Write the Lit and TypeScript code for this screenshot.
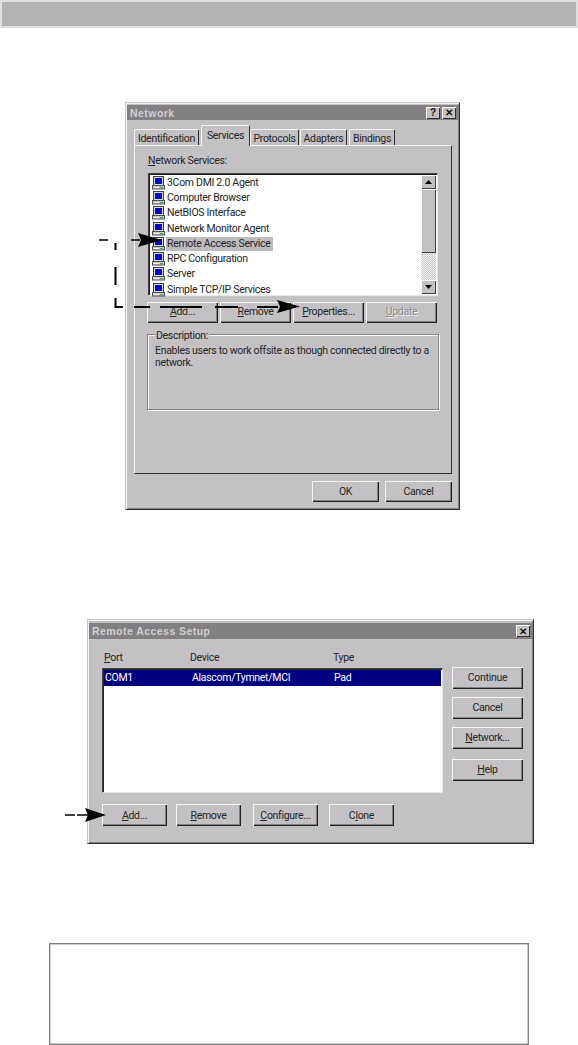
import { LitElement, html, css, svg } from "lit";
import { customElement } from "lit/decorators.js";

const services = [
  "3Com DMI 2.0 Agent",
  "Computer Browser",
  "NetBIOS Interface",
  "Network Monitor Agent",
  "Remote Access Service",
  "RPC Configuration",
  "Server",
  "Simple TCP/IP Services",
];

const monitor = html`<svg class="ico" width="13" height="14" viewBox="0 0 13 14">
  <rect x="1.500" y="0.500" width="10" height="9" fill="#d8d8d8" stroke="#404040" />
  <rect x="3" y="2" width="7" height="6" fill="#0808c8" />
  <rect x="0.500" y="9.500" width="12" height="3.500" fill="#c8c8c8" stroke="#505050" />
  <rect x="2" y="11" width="5" height="1" fill="#f4f4f4" />
  <rect x="8" y="11" width="3" height="1" fill="#30b060" />
</svg>`;

@customElement("app-root")
export class AppRoot extends LitElement {
  static styles = css`
    :host {
      display: block;
      position: relative;
      width: 578px;
      height: 1045px;
      overflow: hidden;
      background: #fff;
      font-family: Roboto, "Liberation Sans", Arial, sans-serif;
      font-size: 10.5px;
      letter-spacing: -0.3px;
      color: #262626;
    }
    .topbar {
      height: 28px;
      box-sizing: border-box;
      border: 2px solid #dedede;
      background: #b2b2b2;
    }
    .dlg {
      box-sizing: border-box;
      background: #c3c1c3;
      border: 1px solid;
      border-color: #c8c8c8 #303030 #303030 #c8c8c8;
      box-shadow: inset 1px 1px 0 #f4f4f4, inset -1px -1px 0 #808080;
      padding: 2px 1px;
    }
    .net {
      width: 335px;
      height: 408px;
      margin: 74px 0 0 125px;
    }
    .ras {
      width: 447px;
      height: 225px;
      margin: 109px 0 0 87px;
      padding-top: 3px;
    }
    .title {
      display: flex;
      align-items: center;
      justify-content: space-between;
      height: 16px;
      padding: 0 2px 0 3px;
      background: #828082;
      color: #cfcfcf;
      font-family: "Liberation Sans", Arial, sans-serif;
      font-weight: bold;
      font-size: 10.5px;
      letter-spacing: 0.45px;
    }
    .net .title {
      height: 15px;
    }
    .ctl {
      display: flex;
      gap: 2px;
    }
    .ctl span {
      box-sizing: border-box;
      width: 14px;
      height: 12px;
      display: flex;
      align-items: center;
      justify-content: center;
      background: #c3c1c3;
      color: #111;
      font-size: 10px;
      font-weight: bold;
      letter-spacing: 0;
      box-shadow: inset 1px 1px 0 #fff, inset -1px -1px 0 #303030;
    }
    .tabs {
      display: flex;
      align-items: flex-end;
      height: 25px;
      padding-left: 7px;
    }
    .tab {
      box-sizing: border-box;
      height: 16px;
      padding-top: 1px;
      display: flex;
      align-items: center;
      justify-content: center;
      border: 1px solid;
      border-color: #f6f6f6 #303030 transparent #f6f6f6;
      border-bottom: 0;
      border-radius: 2px 2px 0 0;
    }
    .tab.on {
      height: 21px;
      padding: 0 0 2px;
      margin-bottom: -1px;
      background: #c3c1c3;
      position: relative;
      z-index: 1;
    }
    .t1 {
      width: 65px;
      margin-right: 2px;
    }
    .t2 {
      width: 49px;
    }
    .t3 {
      width: 49px;
      margin-right: 1px;
    }
    .t4 {
      width: 47px;
      margin-right: 2px;
    }
    .t5 {
      width: 46px;
    }
    .panel {
      box-sizing: border-box;
      width: 318px;
      height: 329px;
      margin-left: 7px;
      padding: 8px 12px 0;
      border: 1px solid;
      border-color: #f6f6f6 #303030 #303030 #f6f6f6;
    }
    .label {
      height: 19px;
      line-height: 13px;
      margin-left: 1px;
    }
    u {
      text-decoration-thickness: 1px;
      text-underline-offset: 1px;
    }
    .list {
      box-sizing: border-box;
      background: #fff;
      border: 1px solid;
      border-color: #404040 #e8e8e8 #e8e8e8 #404040;
      box-shadow: inset 1px 1px 0 #202020;
    }
    .svc {
      display: flex;
      width: 290px;
      height: 123px;
      margin-left: 1px;
    }
    .rows {
      flex: 1;
      padding: 1px 0 0 3px;
    }
    .row {
      display: flex;
      align-items: center;
      height: 15.3px;
      white-space: nowrap;
    }
    .ico {
      flex: none;
      margin-right: 1px;
    }
    .row span {
      padding: 0 2px 0 1px;
      line-height: 14px;
    }
    .row.sel span {
      background: #bdbbbd;
    }
    .sb {
      display: flex;
      flex-direction: column;
      width: 15px;
      margin: 1px 1px 1px 0;
    }
    .sb i {
      display: flex;
      align-items: center;
      justify-content: center;
      box-sizing: border-box;
      background: #c3c1c3;
      box-shadow: inset 1px 1px 0 #fff, inset -1px -1px 0 #404040;
    }
    .sb .arr {
      height: 14px;
    }
    .sb .thumb {
      height: 64px;
    }
    .sb .track {
      flex: 1;
      box-shadow: none;
      background: repeating-conic-gradient(#c8c8c8 0 25%, #f2f2f2 0 50%) 0 0 / 2px 2px;
    }
    .btnrow {
      display: flex;
      margin-top: 6px;
    }
    .btnrow .btn + .btn {
      margin-left: 2px;
    }
    .btn {
      box-sizing: border-box;
      display: flex;
      align-items: center;
      justify-content: center;
      width: 71px;
      height: 21px;
      background: #c3c1c3;
      box-shadow: inset 1px 1px 0 #f4f4f4, inset -1px -1px 0 #202020, inset -2px -2px 0 #808080;
    }
    .btnrow .btn,
    .right .btn {
      padding-bottom: 2px;
    }
    .btn.dis {
      color: #8c8c8c;
      text-shadow: 1px 1px 0 #f2f2f2;
    }
    .group {
      box-sizing: border-box;
      width: 292px;
      height: 76px;
      margin: 11px 0 0 0;
      border: 1px solid #808080;
      box-shadow: 1px 1px 0 #fff, inset 1px 1px 0 #fff;
      padding: 0 7px;
      line-height: 12px;
    }
    .legend {
      width: fit-content;
      margin: -5px 0 3px 0;
      padding: 0 1px;
      background: #c3c1c3;
    }
    .foot {
      display: flex;
      justify-content: flex-end;
      gap: 6px;
      width: 318px;
      margin: 7px 0 0 7px;
    }
    .foot .btn {
      width: 67px;
    }
    .body {
      display: flex;
      padding-left: 13px;
    }
    .left {
      width: 341px;
    }
    .heads {
      display: flex;
      height: 29px;
      padding: 12px 0 0 2px;
      box-sizing: border-box;
      line-height: 13px;
    }
    .c1 {
      width: 86px;
      flex: none;
    }
    .c2 {
      width: 143px;
      flex: none;
    }
    .ports {
      height: 125px;
      padding: 1px;
    }
    .portrow {
      display: flex;
      align-items: center;
      height: 16px;
      padding: 0 0 1px 1px;
      box-sizing: border-box;
      background: #000080;
      color: #fff;
    }
    .portrow .c1 {
      width: 87px;
    }
    .portrow .c2 {
      width: 142px;
    }
    .bottom {
      display: flex;
      margin-top: 11px;
    }
    .bottom .btn {
      width: 65px;
      height: 22px;
    }
    .bottom .btn:nth-child(2) {
      margin: 0 12px 0 9px;
    }
    .bottom .btn:nth-child(4) {
      margin-left: 11px;
    }
    .right {
      display: flex;
      flex-direction: column;
      margin: 28px 0 0 9px;
    }
    .right .btn {
      height: 22px;
      margin-bottom: 8px;
    }
    .right .btn:nth-child(3) {
      margin-bottom: 10px;
    }
    .note {
      box-sizing: border-box;
      width: 480px;
      height: 102px;
      margin: 99px 0 0 49px;
      border: 1px solid #808080;
      box-shadow: inset 0 0 0 0.5px #a0a0a0;
    }
    .marks {
      position: absolute;
      left: 0;
      top: 0;
      pointer-events: none;
    }
  `;

  private marks() {
    return svg`
      <g stroke="#000" fill="none" stroke-width="1.3">
        <path d="M99 240H108 M131 240H140" />
        <path stroke-width="2" d="M115.500 243V250 M115.500 267V285 M115.500 298V307 H123" />
        <path stroke-width="2" d="M134 307H150 M160 307H202 M215 307H238 M257 307H278" />
        <path d="M65 815H75 M77 815H88" />
      </g>
      <g fill="#000">
        <path d="M138 233 L162 240 L138 247 L141 240Z" />
        <path d="M277 300 L300 306.500 L277 313 L280 306.500Z" />
        <path d="M85 808 L106 815 L85 822 L88 815Z" />
      </g>
    `;
  }

  render() {
    return html`
      <div class="topbar"></div>

      <div class="dlg net">
        <div class="title">
          <span>Network</span>
          <div class="ctl"><span>?</span><span>✕</span></div>
        </div>
        <div class="tabs">
          <div class="tab t1">Identification</div>
          <div class="tab on t2">Services</div>
          <div class="tab t3">Protocols</div>
          <div class="tab t4">Adapters</div>
          <div class="tab t5">Bindings</div>
        </div>
        <div class="panel">
          <div class="label"><u>N</u>etwork Services:</div>
          <div class="list svc">
            <div class="rows">
              ${services.map(
                (s, i) => html`<div class="row ${i === 4 ? "sel" : ""}">${monitor}<span>${s}</span></div>`
              )}
            </div>
            <div class="sb">
              <i class="arr"><svg width="7" height="4"><path d="M3.500 0L7 4H0Z" fill="#000" /></svg></i>
              <i class="thumb"></i>
              <i class="track"></i>
              <i class="arr"><svg width="7" height="4"><path d="M0 0H7L3.500 4Z" fill="#000" /></svg></i>
            </div>
          </div>
          <div class="btnrow">
            <div class="btn"><u>A</u>dd...</div>
            <div class="btn"><u>R</u>emove</div>
            <div class="btn"><u>P</u>roperties...</div>
            <div class="btn dis"><u>U</u>pdate</div>
          </div>
          <div class="group">
            <div class="legend">Description:</div>
            <div>Enables users to work offsite as though connected directly to a network.</div>
          </div>
        </div>
        <div class="foot">
          <div class="btn">OK</div>
          <div class="btn">Cancel</div>
        </div>
      </div>

      <div class="dlg ras">
        <div class="title">
          <span>Remote Access Setup</span>
          <div class="ctl"><span>✕</span></div>
        </div>
        <div class="body">
          <div class="left">
            <div class="heads">
              <div class="c1"><u>P</u>ort</div>
              <div class="c2">Device</div>
              <div>Type</div>
            </div>
            <div class="list ports">
              <div class="portrow">
                <div class="c1">COM1</div>
                <div class="c2">Alascom/Tymnet/MCI</div>
                <div>Pad</div>
              </div>
            </div>
            <div class="bottom">
              <div class="btn"><u>A</u>dd...</div>
              <div class="btn"><u>R</u>emove</div>
              <div class="btn"><u>C</u>onfigure...</div>
              <div class="btn">C<u>l</u>one</div>
            </div>
          </div>
          <div class="right">
            <div class="btn">Continue</div>
            <div class="btn">Cancel</div>
            <div class="btn"><u>N</u>etwork...</div>
            <div class="btn"><u>H</u>elp</div>
          </div>
        </div>
      </div>

      <div class="note"></div>

      <svg class="marks" width="578" height="1045" viewBox="0 0 578 1045">${this.marks()}</svg>
    `;
  }
}
